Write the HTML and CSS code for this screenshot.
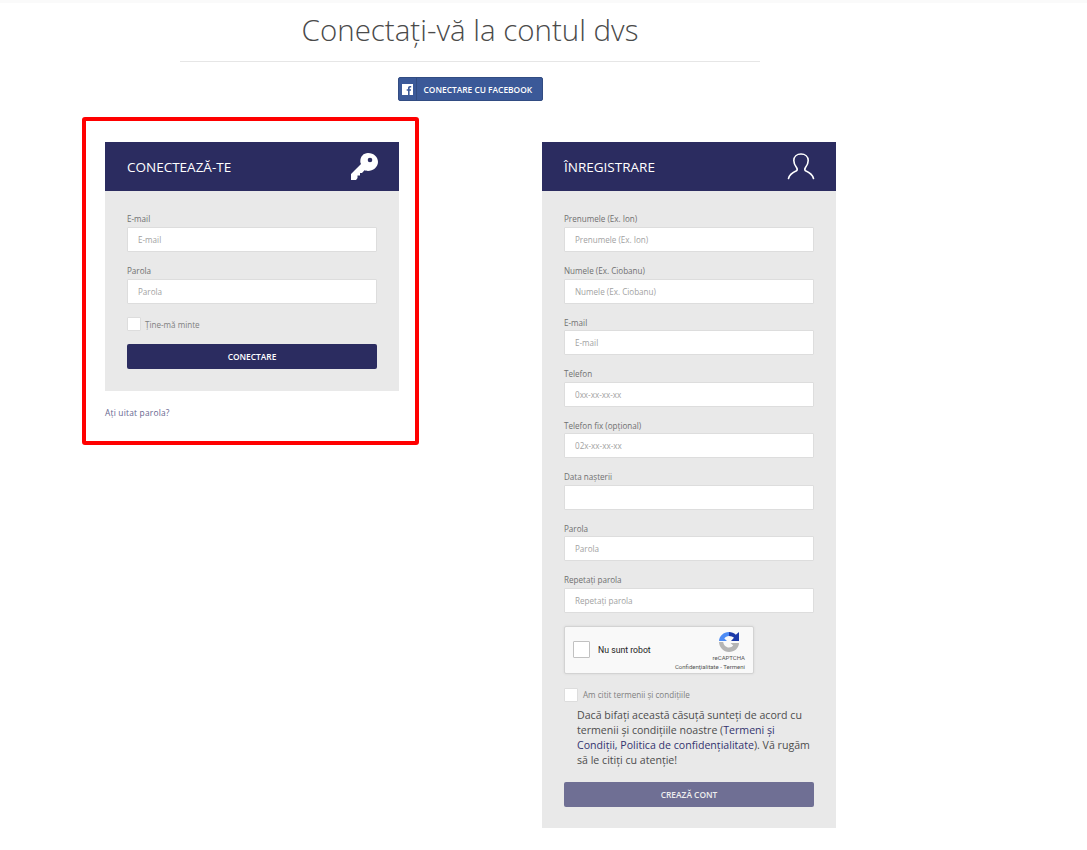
FILE: index.html
```html
<!DOCTYPE html>
<html lang="ro">
<head>
  <meta charset="UTF-8" />
  <meta name="viewport" content="width=device-width, initial-scale=1" />
  <title>Conectați-vă la contul dvs</title>
  <link rel="stylesheet" href="styles.css">
</head>
<body>

<div class="top-line"></div>

<div class="page-head">
  <h1>Conectaţi-vă la contul dvs</h1>
  <a href="#" class="fb-btn">
    <span class="fb-icon">
      <svg width="11" height="11" viewBox="0 0 11 11"><path fill="#fff" fill-rule="evenodd" d="M0 0h11v11H7.600V6.800h1.300l.2-1.500H7.600v-1c0-.5.200-.8.800-.8h.8V2.100C9 2.100 8.500 2 8 2 6.800 2 6 2.800 6 4.100v1.200H4.700v1.500H6V11H0z"/></svg>
    </span>
    <span class="fb-text">CONECTARE CU FACEBOOK</span>
  </a>
</div>

<div class="columns">
  <div class="login-mark">
    <section class="card">
      <div class="card-head">
        <h2>CONECTEAZĂ-TE</h2>
        <svg class="key-icon" width="27" height="27" viewBox="0 0 27 27"><path fill="#fff" fill-rule="evenodd" d="M17 0c6 0 10 4 10 9s-5 9-10 9c-1.500 0-2.500-.5-3.500-.7L11 20H9v2.500H6.500V25L5 27H0v-6l10-10c-.5-1-.7-1.500-.7-2.500C9.300 3.500 12.500 0 17 0zm2 4.700a2.300 2.300 0 1 0 0 4.600 2.300 2.300 0 0 0 0-4.600z"/></svg>
      </div>
      <form class="card-body">
        <label class="field">E-mail<input type="text" placeholder="E-mail"></label>
        <label class="field">Parola<input type="password" placeholder="Parola"></label>
        <label class="check remember"><span class="box"></span>Ţine-mă minte</label>
        <button type="button" class="btn">CONECTARE</button>
      </form>
    </section>
    <a href="#" class="forgot">Aţi uitat parola?</a>
  </div>

  <section class="card register">
    <div class="card-head">
      <h2>ÎNREGISTRARE</h2>
      <svg class="user-icon" width="28" height="27" viewBox="0 0 28 27"><path fill="none" stroke="#fff" stroke-width="1.600" stroke-linecap="round" d="M1.500 25.500c1-4 4-6 8-7.700 1-.8 1-1.800 0-3.300-2-2.500-2.700-5-2.700-7C6.800 3.500 10 1 14 1s7.200 2.500 7.200 6.500c0 2-.7 4.500-2.700 7-1 1.500-1 2.500 0 3.300 4 1.700 7 3.700 8 7.700"/></svg>
    </div>
    <form class="card-body">
      <label class="field">Prenumele (Ex. Ion)<input type="text" placeholder="Prenumele (Ex. Ion)"></label>
      <label class="field">Numele (Ex. Ciobanu)<input type="text" placeholder="Numele (Ex. Ciobanu)"></label>
      <label class="field">E-mail<input type="text" placeholder="E-mail"></label>
      <label class="field">Telefon<input type="text" placeholder="0xx-xx-xx-xx"></label>
      <label class="field">Telefon fix (opţional)<input type="text" placeholder="02x-xx-xx-xx"></label>
      <label class="field">Data naşterii<input type="text"></label>
      <label class="field">Parola<input type="password" placeholder="Parola"></label>
      <label class="field">Repetaţi parola<input type="password" placeholder="Repetaţi parola"></label>

      <div class="captcha">
        <span class="captcha-box"></span>
        <span class="captcha-label">Nu sunt robot</span>
        <div class="captcha-brand">
          <svg width="20" height="20" viewBox="0 0 20 20">
            <path fill="#1c3aa9" d="M10 0c2.600 0 5 1 6.800 2.800L20 0v9h-8l3-3.200C13.800 4.700 12 4 10 4z"/>
            <path fill="#4c8bf5" d="M10 0v4C8 4 6.300 5 5.300 6.500L8 9H0C.3 4 4.500 0 10 0z"/>
            <path fill="#b5b5b5" d="M0 10h4.200C4.700 13.200 7 15.500 10 15.500c1.800 0 3.200-.8 4.200-2L11.500 11H20c0 5-4.500 9-10 9S.3 15.500 0 10z"/>
          </svg>
          <span class="captcha-name">reCAPTCHA</span>
          <span class="captcha-links">Confidenţialitate - Termeni</span>
        </div>
      </div>

      <label class="check terms"><span class="box"></span>Am citit termenii şi condiţiile</label>
      <p class="terms-text">Dacă bifaţi această căsuţă sunteţi de acord cu termenii şi condiţiile noastre (<a href="#">Termeni şi Condiţii, Politica de confidenţialitate</a>). Vă rugăm să le citiţi cu atenţie!</p>
      <button type="button" class="btn btn-off">CREAZĂ CONT</button>
    </form>
  </section>
</div>

</body>
</html>
```

FILE: styles.css
```css
* {
  box-sizing: border-box;
}
body {
  margin: 0;
  background: #fff;
  color: #555;
  font-family: "Open Sans", sans-serif;
  font-size: 8.100px;
}
.top-line {
  height: 3px;
  background: #fafafa;
}
.page-head {
  width: 580px;
  margin-left: 180px;
  text-align: center;
}
h1 {
  margin: 0;
  padding-top: 8px;
  height: 59px;
  border-bottom: 1px solid #e6e6e6;
  font-size: 29.500px;
  line-height: 38px;
  font-weight: 300;
  color: #4a4a4a;
}
.fb-btn {
  display: inline-flex;
  align-items: center;
  width: 145px;
  height: 24px;
  margin-top: 15px;
  background: #3b5998;
  border: 1px solid #324c82;
  border-radius: 2px;
  color: #fff;
  text-decoration: none;
}
.fb-icon {
  display: flex;
  align-items: center;
  justify-content: center;
  width: 18px;
  height: 100%;
  border-right: 1px solid #324c82;
}
.fb-text {
  margin-left: 7px;
  font-size: 8.400px;
  font-weight: 600;
  white-space: nowrap;
}
.columns {
  display: flex;
  align-items: flex-start;
  margin-top: 16px;
  padding-left: 82px;
}
.login-mark {
  width: 337px;
  height: 328px;
  padding: 21px 19px 0 19px;
  border: 4px solid #f00;
  border-radius: 3px;
}
.card {
  width: 294px;
}
.register {
  margin-left: 123px;
  margin-top: 25px;
}
.card-head {
  display: flex;
  align-items: center;
  justify-content: space-between;
  height: 49px;
  padding: 0 21px 0 22px;
  background: #2b2c60;
  color: #fff;
}
.card-head h2 {
  margin: 0;
  font-size: 13.500px;
  font-weight: 400;
}
.card-body {
  padding: 22px 22px 22px;
  background: #e9e9e9;
}
.register .card-body {
  padding-bottom: 21px;
}
.field {
  display: block;
  height: 51.570px;
  padding-top: 0.400px;
  line-height: 12px;
  color: #707070;
}
.field input {
  display: block;
  width: 100%;
  height: 25px;
  margin-top: 1.600px;
  padding: 0 10px;
  background: #fff;
  border: 1px solid #ddd;
  border-radius: 1px;
  font-family: inherit;
  font-size: 8.100px;
  color: #555;
}
.field input::placeholder {
  color: #a2a2a2;
  opacity: 1;
}
.check {
  display: flex;
  align-items: center;
  color: #808080;
}
.box {
  width: 14px;
  height: 14px;
  margin-right: 4px;
  background: #fff;
  border: 1px solid #ddd;
  border-radius: 1px;
}
.remember {
  height: 14px;
  margin-top: 1px;
}
.btn {
  display: block;
  width: 100%;
  height: 25px;
  margin-top: 13px;
  background: #2b2c60;
  border: 0;
  border-radius: 2px;
  color: #fff;
  font-family: inherit;
  font-size: 8.400px;
  font-weight: 600;
}
.btn-off {
  background: #6f6f94;
  color: #eee;
}
.forgot {
  display: block;
  margin-top: 16px;
  color: #66668f;
  text-decoration: none;
  font-size: 8.400px;
  letter-spacing: 0.2px;
}
.captcha {
  display: flex;
  align-items: center;
  justify-content: space-between;
  width: 190px;
  height: 48px;
  padding: 0 8px 0 8px;
  background: #f9f9f9;
  border: 1px solid #d3d3d3;
  border-radius: 2px;
  box-shadow: 0 0 3px rgba(0, 0, 0, 0.08);
}
.captcha-box {
  flex: none;
  width: 17px;
  height: 17px;
  background: #fff;
  border: 1px solid #c1c1c1;
  border-radius: 1px;
}
.captcha-label {
  flex: 1;
  margin-left: 8px;
  font-family: Roboto, sans-serif;
  font-size: 8.700px;
  color: #222;
}
.captcha-brand {
  display: flex;
  flex-direction: column;
  align-items: flex-end;
  padding-top: 4px;
  font-family: Roboto, sans-serif;
  color: #555;
}
.captcha-brand svg {
  margin-right: 6px;
}
.captcha-name {
  margin-top: 2px;
  font-size: 6px;
  line-height: 8px;
}
.captcha-links {
  font-size: 6px;
  line-height: 10px;
  white-space: nowrap;
}
.terms {
  height: 14px;
  margin-top: 14px;
}
.terms .box {
  margin-right: 5px;
}
.terms-text {
  margin: 6px 0 0 13px;
  font-size: 10.600px;
  line-height: 15.300px;
  color: #4d4d4d;
}
.terms-text a {
  color: #33346f;
  text-decoration: none;
}
```
